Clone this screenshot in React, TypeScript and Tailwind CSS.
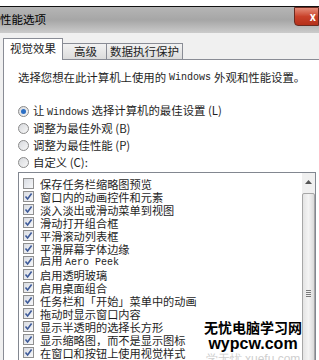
import React from "react";

const cjk = { fontFamily: '"Noto Sans CJK SC", "Noto Sans", sans-serif' };
const mono = { fontFamily: '"Liberation Mono", "DejaVu Sans Mono", monospace' };

const items: { label: React.ReactNode; checked: boolean }[] = [
  { label: "保存任务栏缩略图预览", checked: false },
  { label: "窗口内的动画控件和元素", checked: true },
  { label: "淡入淡出或滑动菜单到视图", checked: true },
  { label: "滑动打开组合框", checked: true },
  { label: "平滑滚动列表框", checked: true },
  { label: "平滑屏幕字体边缘", checked: true },
  {
    label: (
      <>
        启用 <span style={mono} className="text-[10px]">Aero Peek</span>
      </>
    ),
    checked: true,
  },
  { label: "启用透明玻璃", checked: true },
  { label: "启用桌面组合", checked: true },
  { label: "任务栏和「开始」菜单中的动画", checked: true },
  { label: "拖动时显示窗口内容", checked: true },
  { label: "显示半透明的选择长方形", checked: true },
  { label: "显示缩略图，而不是显示图标", checked: true },
  { label: "在窗口和按钮上使用视觉样式", checked: true },
  { label: "在桌面上为图标标签使用阴影", checked: true },
];

function CheckBox({ checked }: { checked: boolean }) {
  return (
    <span className="flex h-[11px] w-[11px] shrink-0 items-center justify-center border border-[#8f8f8f] bg-gradient-to-br from-[#d9dce2] to-[#f6f7f9]">
      {checked && (
        <svg width="9" height="9" viewBox="0 0 9 9">
          <path d="M1.5 4.5 L3.6 7 L7.6 1.5" fill="none" stroke="#3d5a99" strokeWidth="1.6" />
        </svg>
      )}
    </span>
  );
}

function Radio({ selected }: { selected: boolean }) {
  return (
    <span className="flex h-[11px] w-[11px] shrink-0 items-center justify-center rounded-full border border-[#8a8a8a] bg-gradient-to-br from-[#d7d9dd] to-[#f7f7f7]">
      {selected && <span className="h-[5px] w-[5px] rounded-full bg-[#2c6fc4]" />}
    </span>
  );
}

const radios = [
  {
    label: (
      <>
        让 <span style={mono} className="text-[10px]">Windows</span> 选择计算机的最佳设置 (L)
      </>
    ),
    selected: true,
  },
  { label: "调整为最佳外观 (B)", selected: false },
  { label: "调整为最佳性能 (P)", selected: false },
  { label: "自定义 (C):", selected: false },
];

export default function App() {
  return (
    <div style={cjk} className="relative h-[360px] w-[319px] overflow-hidden bg-white text-[#1e1e1e]">
      <div className="h-[6px] bg-white" />
      <div className="h-px bg-[#111]" />
      <div className="flex h-[26px] items-center justify-between bg-gradient-to-b from-[#b5b5b5] via-[#a6a6a6] to-[#cbcbcb]">
        <span className="text-[11.5px] leading-none text-black">性能选项</span>
        <div className="mb-[7px] flex h-[19px] w-[25px] items-center justify-end self-start rounded-bl-[4px] border border-[#6b2a20] bg-gradient-to-b from-[#e48b78] via-[#c9412a] to-[#b5301a] pr-[2px] text-[11px] font-bold leading-none text-white">
          x
        </div>
      </div>
      <div className="bg-[#f0f0f0] pl-[3px] pt-[5px]">
        <div className="flex h-[21px] items-end text-[11.5px] leading-none">
          <div className="relative z-10 -mb-px flex h-[22px] w-[60px] items-center justify-center border border-b-0 border-[#898c95] bg-white pb-[2px]">
            视觉效果
          </div>
          <div className="flex h-[16px] w-[44px] items-center justify-center border border-l-0 border-b-0 border-[#898c95] bg-gradient-to-b from-[#f2f2f2] to-[#dcdcdc] pl-[2px]">
            高级
          </div>
          <div className="flex h-[16px] w-[76px] items-center justify-center border border-l-0 border-b-0 border-[#898c95] bg-gradient-to-b from-[#f2f2f2] to-[#dcdcdc]">
            数据执行保护
          </div>
        </div>
        <div className="border-l border-t border-[#898c95] bg-white pl-[14px] pt-[11px]">
          <div className="flex h-[14px] items-center whitespace-nowrap text-[11.4px] leading-none">
            选择您想在此计算机上使用的 <span style={mono} className="mx-[3px] text-[10px]">Windows</span> 外观和性能设置。
          </div>
          <div className="mt-[18px]">
            {radios.map((r, i) => (
              <div key={i} className="flex h-[17px] items-center gap-[4px] whitespace-nowrap text-[11.4px] leading-none">
                <Radio selected={r.selected} />
                <span>{r.label}</span>
              </div>
            ))}
          </div>
          <div className="mt-px flex w-[298px] border border-[#828790] bg-white">
            <div className="flex-1 pl-[4px] pt-[4px]">
              {items.map((it, i) => (
                <div key={i} className="flex h-[13px] items-center gap-[6px] overflow-hidden whitespace-nowrap text-[11.2px] leading-[12px]">
                  <CheckBox checked={it.checked} />
                  <span>{it.label}</span>
                </div>
              ))}
            </div>
            <div className="flex w-[13px] flex-col bg-[#f0f0f0]">
              <div className="flex h-[18px] items-center justify-center">
                <svg width="7" height="4" viewBox="0 0 7 4">
                  <path d="M0 4 L3.5 0 L7 4 Z" fill="#555" />
                </svg>
              </div>
              <div className="mt-[2px] flex flex-1 flex-col items-center rounded-[2px] border border-[#a7a7a7] bg-gradient-to-r from-[#e4e4e4] via-[#f4f4f4] to-[#dadada] pt-[96px]">
                <div className="flex flex-col gap-[1px]">
                  <span className="h-px w-[5px] bg-[#7a7a7a]" />
                  <span className="h-px w-[5px] bg-[#7a7a7a]" />
                  <span className="h-px w-[5px] bg-[#7a7a7a]" />
                  <span className="h-px w-[5px] bg-[#7a7a7a]" />
                </div>
              </div>
            </div>
          </div>
        </div>
      </div>
      <div className="absolute left-[204px] top-[320px] flex flex-col items-center leading-none">
        <span className="text-[14px] font-bold text-black [text-shadow:0_0_3px_#fff]">无忧电脑学习网</span>
        <span
          style={{ fontFamily: '"Liberation Sans", Arial, sans-serif' }}
          className="mt-[2px] text-[16px] font-bold text-black [text-shadow:0_0_3px_#fff]"
        >
          wypcw.com
        </span>
        <span
          style={{ fontFamily: '"Liberation Sans", Arial, sans-serif' }}
          className="mt-[1px] text-[12px] text-[#cfcfcf]"
        >
          学无忧 xuefu.com
        </span>
      </div>
    </div>
  );
}
